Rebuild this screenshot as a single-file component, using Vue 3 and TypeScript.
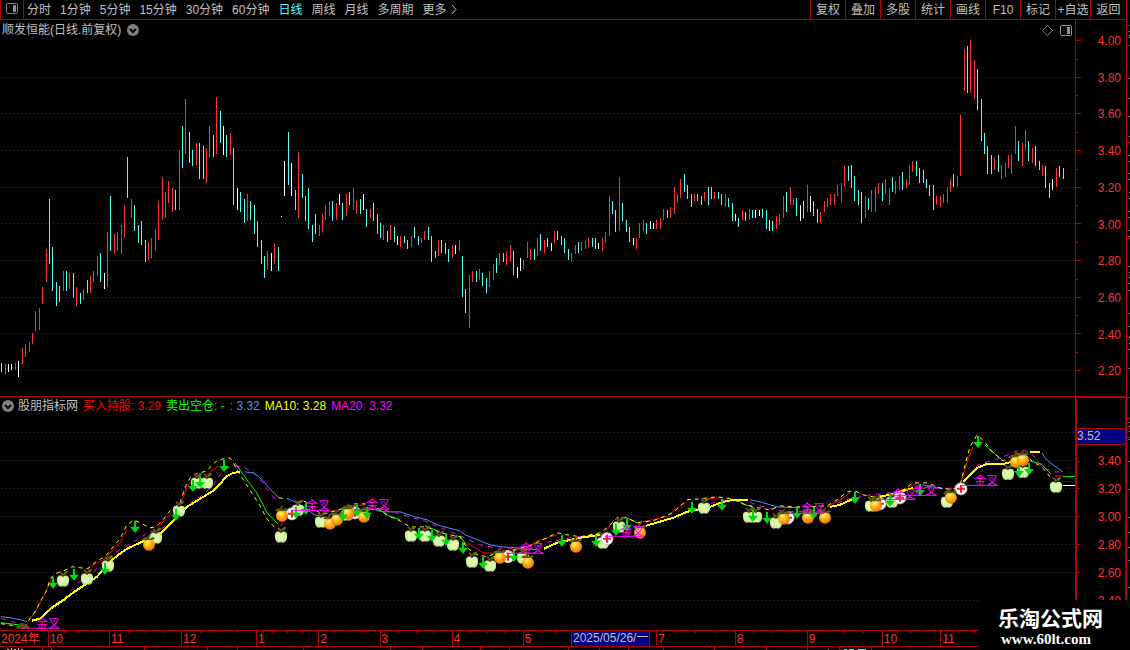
<script setup lang="ts">
import { ref } from 'vue'

type Point = [number, number]

const periods = ['分时', '1分钟', '5分钟', '15分钟', '30分钟', '60分钟', '日线', '周线', '月线', '多周期']
const active = ref('日线')
const tools = ['复权', '叠加', '多股', '统计', '画线', 'F10', '标记', '+自选', '返回']

const priceLabels = ['4.00', '3.80', '3.60', '3.40', '3.20', '3.00', '2.80', '2.60', '2.40', '2.20']
const subLabels = ['3.40', '3.20', '3.00', '2.80', '2.60', '2.40']
const priceTicks = [40, 77, 113, 150, 187, 223, 260, 297, 333, 370]
const priceMinor = [59, 95, 132, 169, 205, 242, 279, 315, 352]
const subGrid = [432, 460, 488, 516, 544, 572, 600]
const subMinor = [446, 474, 502, 530, 558, 586]

const bars = [
  {
    tone: 'up',
    data: `5,364,374 15,363,370 22,348,364 25,344,357 29,342,352 32,333,344 35,311,331 39,308,330 42,287,304 46,249,282
63,271,291 69,273,289 76,287,306 83,289,300 90,276,293 93,271,282 97,256,276 107,232,287 114,234,254 117,232,251 121,225,254 124,205,238
131,199,218 148,242,260 151,238,258 155,229,251 158,201,240 162,177,220 165,192,218 168,181,203 172,188,212 179,150,210 185,99,154
196,143,165 206,148,183 209,126,157 216,97,154 230,133,155 247,194,221 267,251,269 274,243,264 298,152,218 319,225,236 322,214,232
325,205,220 329,201,216 336,203,220 346,194,216 353,188,210 356,201,214 370,209,218 383,225,240 390,225,240 400,236,247 411,236,247
421,238,243 424,231,240 438,240,256 452,245,258 459,240,251 469,275,328 472,271,282 479,269,280 489,271,287 493,264,280 499,253,265
506,251,265 510,245,262 523,260,269 527,242,258 530,249,260 537,238,256 544,240,253 554,231,243 571,253,262 575,245,254 581,242,251
585,240,249 588,238,247 602,238,251 605,232,243 609,196,236 619,177,231 636,238,249 639,223,238 643,220,231 656,220,229 660,218,229
663,209,220 670,207,218 674,187,214 677,194,203 680,179,198 694,194,201 704,192,201 714,192,199 725,194,207 742,210,220 749,209,220
776,216,229 779,214,225 783,196,218 790,187,205 793,198,205 807,185,212 820,212,223 824,201,212 827,198,207 830,194,205 834,194,205
837,185,196 841,183,203 844,166,187 865,196,218 871,190,212 875,187,212 878,183,194 885,179,194 889,188,205 895,181,194 899,176,190
906,179,188 909,165,185 912,161,172 936,196,205 940,196,207 943,194,203 947,187,203 950,179,192 957,176,187 960,115,176 964,49,91
970,40,93 974,60,99 994,157,170 1001,165,179 1005,163,177 1008,155,168 1011,154,174 1015,126,154 1022,143,166 1025,130,150
1032,148,163 1042,165,176 1056,168,187`,
  },
  {
    tone: 'down',
    data: `1,363,372 49,199,264 52,247,291 56,282,306 59,286,302 66,271,291 73,273,298 80,293,304 87,280,293 100,253,282
110,196,251 127,157,198 134,205,231 138,225,243 141,221,245 145,240,262 175,190,210 182,126,168 189,132,163 192,150,166 199,143,179
203,146,179 213,135,157 220,111,143 226,135,157 233,148,205 240,192,212 244,199,223 250,201,220 254,205,234 257,221,247 261,240,264
264,256,278 278,247,271 288,132,185 295,190,210 302,174,198 305,196,221 308,188,229 312,225,242 315,214,234 332,201,221 342,203,220
349,192,205 360,199,214 366,209,227 373,203,221 377,214,234 380,223,238 387,231,242 394,227,242 404,236,243 407,240,249 414,227,238
418,236,245 428,227,240 431,236,262 435,251,258 441,240,253 445,243,254 448,249,262 462,256,297 465,289,313 476,271,282 482,273,286
486,278,293 496,258,273 503,253,262 513,251,275 534,249,260 540,234,251 547,238,247 557,231,240 561,236,245 564,238,253 568,249,260
578,242,253 592,238,247 595,238,249 612,201,214 615,210,232 622,203,221 626,220,232 629,227,242 646,223,234 667,210,218 684,174,192
687,185,199 691,194,207 697,194,201 701,196,205 708,187,205 711,187,199 718,192,199 721,194,205 728,198,207 732,203,221 738,218,227
745,212,221 752,210,218 762,209,218 766,210,229 772,221,231 786,192,212 796,198,216 803,201,218 813,201,216 817,209,223 848,166,181
851,165,188 854,176,201 858,190,205 861,192,223 868,198,210 882,183,201 892,177,192 902,172,190 916,161,176 919,168,183 923,170,183
926,179,188 929,185,196 933,185,210 953,174,187 967,46,93 977,69,110 981,99,141 984,133,154 987,146,174 991,155,174 998,155,172
1018,141,161 1028,141,161 1035,146,166 1039,161,170 1045,166,188 1049,183,198 1059,166,177 1063,168,179`,
  },
  {
    tone: 'flat',
    data: `8,364,372 11,364,370 18,361,377 104,273,289 223,126,155 237,188,210 271,253,271 281,216,217 284,161,196 291,163,196
339,194,205 363,194,210 397,236,245 455,245,254 517,267,278 520,258,271 551,243,251 598,243,249 633,238,245 650,221,229 653,223,229
735,214,221 755,210,218 759,210,216 769,220,231 800,205,221 810,196,212 1052,179,190`,
  },
].map((group) => ({
  tone: group.tone,
  path: group.data
    .split(/\s+/)
    .map((item) => {
      const [x, top, bottom] = item.split(',')
      return `M${x} ${top}h1V${bottom}h-1z`
    })
    .join(''),
}))

const curves: { kind: string; points: string }[] = [
  { kind: 'blue', points: '1,617 10,618 20,620 27,622' },
  { kind: 'blue', points: '245,472 253,473 258,476 263,481 269,488 275,494 279,498' },
  { kind: 'blue', points: '288,499 293,501 300,505 304,507 310,512 314,515 320,516' },
  { kind: 'blue', points: '370,508 378,511 385,512 400,512 415,517 427,520 440,526 460,531 465,535 480,541 490,545 500,547 517,548 537,550' },
  { kind: 'blue', points: '750,500 760,502 777,507 800,508' },
  { kind: 'blue', points: '922,485 943,489' },
  { kind: 'blue', points: '1042,453 1045,458 1053,465 1063,472' },
  { kind: 'magenta', points: '1,619 12,622 27,625' },
  { kind: 'magenta', points: '42,618 52,606 65,598 78,583 93,573 105,560 120,550 135,541 150,532 160,530 175,520 187,505 200,497 212,487 222,472 232,466 243,467 253,472 262,482 270,493 278,503' },
  { kind: 'magenta', points: '325,512 345,511 375,508 400,514 427,522 460,536 480,545 500,549 530,549 550,542 575,537 600,536 630,530 645,526 675,517 700,508 718,501 740,499 760,506 785,512 820,511 845,500 870,495 900,492 915,487 950,489 965,480 978,465 1000,458 1020,450 1030,452 1043,468 1055,472 1063,472' },
  { kind: 'red', points: '27,621 35,613 42,600 48,587 52,578' },
  { kind: 'red', points: '88,568 97,563 107,558 110,553 120,543 127,530' },
  { kind: 'red', points: '157,529 163,522 172,512' },
  { kind: 'red', points: '181,503 187,487 193,480' },
  { kind: 'red', points: '207,475 218,466' },
  { kind: 'red', points: '281,527 283,520' },
  { kind: 'red', points: '322,512 335,511 350,506 365,505' },
  { kind: 'red', points: '467,543 483,553 500,554 527,548 538,541 557,535' },
  { kind: 'red', points: '600,535 607,530 614,520' },
  { kind: 'red', points: '637,523 667,517 677,508 687,502' },
  { kind: 'red', points: '705,499 719,498' },
  { kind: 'red', points: '827,507 840,500 850,493' },
  { kind: 'red', points: '900,492 917,483' },
  { kind: 'red', points: '961,482 967,462 973,447' },
  { kind: 'red', points: '1055,476 1063,476' },
  { kind: 'green', points: '1,623 25,626' },
  { kind: 'green', points: '235,463 247,480 256,492 262,503 267,513 278,524' },
  { kind: 'green', points: '378,509 389,516 400,520' },
  { kind: 'green', points: '425,526 440,532' },
  { kind: 'green', points: '460,536 467,546' },
  { kind: 'green', points: '627,518 637,523' },
  { kind: 'green', points: '738,501 745,505 752,506' },
  { kind: 'green', points: '985,445 995,454 1003,461' },
  { kind: 'green', points: '1030,461 1041,464 1051,474' },
  { kind: 'dash', points: '1,624 25,628 28,622 35,612 42,599 47,590 50,579 55,574 64,571 72,567 88,569 97,561 105,557 110,551 120,539 127,525 134,520 142,524 150,528 156,527 163,520 170,511 180,503 185,488 190,478 196,474 207,471 212,465 218,460 230,458 235,466 240,475 250,490 260,506 267,519 275,528 281,530' },
  { kind: 'dash', points: '279,498 288,499' },
  { kind: 'dash', points: '296,503 302,501 306,502 312,508 320,513 325,514 345,508 355,504 365,504 375,507 388,516 400,521 410,527 427,527 440,533 460,537 467,548 477,555 487,557 500,552 513,550 527,547 543,540 557,533 567,535 580,537 600,533 607,528 617,518 627,518 637,523 653,521 673,513 687,500 700,499 717,497 733,499 740,503 753,507 770,510 780,506 793,507 807,507 827,506 837,500 847,492 855,491 863,495 873,497 887,495 903,490 913,483 927,483 940,488 953,490 961,482 965,465 970,447 977,435 985,442 990,450 1003,461 1013,455 1023,453 1033,462 1042,467 1050,477' },
  { kind: 'gold', points: '32,621 40,619 52,608 64,600 73,593 82,587 97,577 107,565 117,556 127,549 140,543 150,538 161,533 170,524 187,507 200,499 213,491 220,484 227,476 233,473 240,472' },
  { kind: 'gold', points: '544,549 557,543 580,538 600,535' },
  { kind: 'gold', points: '646,526 673,518 687,512 710,507 723,502 733,500 748,500' },
  { kind: 'gold', points: '830,507 840,505 855,498' },
  { kind: 'gold', points: '880,497 897,493 913,488' },
  { kind: 'gold', points: '963,482 970,475 977,468 987,464 1003,464 1012,462' },
  { kind: 'gold', points: '1030,452 1040,452' },
]

const apples: Point[] = [
  [63, 581], [87, 579], [108, 566], [156, 538], [179, 511], [197, 483], [207, 483], [281, 537], [298, 510], [321, 522], [347, 515],
  [411, 536], [425, 536], [439, 541], [453, 545], [472, 562], [490, 566], [523, 558], [603, 543], [619, 527], [704, 508],
  [749, 517], [756, 517], [776, 523], [871, 506], [892, 502], [947, 502], [1008, 474], [1023, 472], [1056, 487],
]
const crosses: Point[] = [[292, 514], [355, 513], [508, 557], [607, 539], [788, 518], [880, 504], [900, 498], [961, 489]]
const oranges: Point[] = [
  [149, 545], [282, 516], [330, 524], [337, 520], [348, 514], [364, 517], [500, 558], [528, 563], [576, 547], [640, 533],
  [784, 519], [808, 518], [825, 518], [876, 506], [951, 498], [1016, 462], [1023, 460],
]
const arrows: Point[] = [
  [53, 583], [74, 575], [105, 569], [135, 527], [176, 515], [193, 486], [200, 482], [224, 466], [296, 513], [306, 509], [343, 515],
  [357, 511], [367, 513], [419, 534], [432, 536], [446, 540], [463, 548], [483, 563], [514, 556], [562, 541], [596, 541], [616, 530],
  [627, 525], [692, 508], [722, 505], [753, 516], [767, 518], [797, 513], [814, 513], [855, 498], [890, 501], [920, 490], [978, 442],
  [1019, 471], [1029, 469],
]
const signals: { x: number; y: number; from: number }[] = [
  { x: 36, y: 628, from: 22 },
  { x: 306, y: 510, from: 292 },
  { x: 366, y: 509, from: 352 },
  { x: 520, y: 553, from: 506 },
  { x: 620, y: 536, from: 605 },
  { x: 801, y: 513, from: 788 },
  { x: 892, y: 499, from: 880 },
  { x: 913, y: 495, from: 900 },
  { x: 974, y: 485, from: 961 },
]

const months = [
  { label: '2024年', span: 48 },
  { label: '10', span: 61 },
  { label: '11', span: 72 },
  { label: '12', span: 75 },
  { label: '1', span: 62 },
  { label: '2', span: 61 },
  { label: '3', span: 72 },
  { label: '4', span: 71 },
  { label: '5', span: 67 },
  { label: '', span: 66 },
  { label: '7', span: 79 },
  { label: '8', span: 72 },
  { label: '9', span: 75 },
  { label: '10', span: 58 },
  { label: '11', span: 68 },
  { label: '', span: 119 },
]
const cursorLeft = `${(571 / 1126) * 100}%`

const edgeRed = [25, 45, 142, 238, 336, 397, 418, 437]
const edgeLight = [
  31, 35, 37, 78, 98, 116, 136, 155, 161, 173, 179, 192, 198, 211, 217, 230, 236, 266, 272, 277, 283, 290, 313, 326, 337, 343, 349, 368,
  422, 426, 431, 439, 461, 489, 517, 532, 547, 560, 587,
]
const footTicks = [42, 144, 207, 237, 303, 390, 422, 480, 509, 568, 599, 628, 663, 714, 766, 807, 839, 871]
</script>

<template>
  <div class="terminal">
    <div class="body">
      <header class="toolbar">
        <button class="panel-toggle" type="button" aria-label="侧栏">
          <svg width="12" height="11" viewBox="0 0 12 11" shape-rendering="crispEdges">
            <path d="M1 0h10v1h1v9h-1v1H1v-1H0V1h1zM1 1v9h10V1z" fill="#808080" fill-rule="evenodd" />
            <rect x="7" y="2" width="3" height="7" fill="#909090" />
          </svg>
        </button>
        <nav class="periods">
          <button v-for="p in periods" :key="p" type="button" :class="{ active: p === active }" @click="active = p">{{ p }}</button>
          <button type="button" class="more">
            更多
            <svg width="6" height="9" viewBox="0 0 6 9"><path d="M1 0l4 4.500l-4 4.500" fill="none" stroke="#c0c0c0" /></svg>
          </button>
        </nav>
        <div class="tools">
          <button v-for="t in tools" :key="t" type="button">{{ t }}</button>
        </div>
      </header>

      <section class="panel main">
        <div class="plot">
          <div class="title-row">
            <span>顺发恒能(日线.前复权)</span>
            <button class="round" type="button" aria-label="展开">
              <svg width="12" height="12" viewBox="0 0 12 12"><circle cx="6" cy="6" r="6" fill="#808080" /><path d="M3 5l3 3l3-3" fill="none" stroke="#000" stroke-width="2" /></svg>
            </button>
            <span class="corner">
              <svg width="11" height="11" viewBox="0 0 11 11"><path d="M5.500 .5l5 5l-5 5l-5-5z" fill="none" stroke="#808080" /></svg>
              <svg width="12" height="11" viewBox="0 0 12 11" shape-rendering="crispEdges">
                <path d="M1 0h10v1h1v9h-1v1H1v-1H0V1h1zM1 1v9h10V1z" fill="#909090" fill-rule="evenodd" />
                <rect x="7" y="2" width="3" height="7" fill="#909090" />
              </svg>
            </span>
          </div>
          <svg class="chart" viewBox="0 38 1075 358" preserveAspectRatio="none" shape-rendering="crispEdges">
            <defs>
              <pattern id="dots" width="4" height="1" patternUnits="userSpaceOnUse"><rect x="1" width="1" height="1" fill="#b00000" /></pattern>
            </defs>
            <rect v-for="y in priceTicks.slice(1)" :key="y" x="0" :y="y" width="1075" height="1" fill="url(#dots)" />
            <path v-for="b in bars" :key="b.tone" :d="b.path" :class="b.tone" />
          </svg>
        </div>
        <div class="axis">
          <svg class="ticks" viewBox="0 20 5 376" preserveAspectRatio="none" shape-rendering="crispEdges">
            <rect v-for="y in priceTicks" :key="y" :y="y" width="5" height="1" />
            <rect v-for="y in priceMinor" :key="y" :y="y" width="2" height="1" />
          </svg>
          <div class="labels">
            <span v-for="l in priceLabels" :key="l">{{ l }}</span>
          </div>
        </div>
      </section>

      <section class="panel sub">
        <div class="plot">
          <div class="legend">
            <button class="round" type="button" aria-label="展开指标">
              <svg width="12" height="12" viewBox="0 0 12 12"><circle cx="6" cy="6" r="6" fill="#808080" /><path d="M3 5l3 3l3-3" fill="none" stroke="#000" stroke-width="2" /></svg>
            </button>
            <span>股朋指标网</span>
            <span class="c-red">买入持股: 3.29</span>
            <span class="c-green">卖出空仓: -</span>
            <span class="c-blue">: 3.32</span>
            <span class="c-yellow">MA10: 3.28</span>
            <span class="c-magenta">MA20: 3.32</span>
          </div>
          <svg class="chart" viewBox="0 414 1075 216" preserveAspectRatio="none">
            <defs>
              <radialGradient id="peel" cx="40%" cy="30%" r="70%">
                <stop offset="0" stop-color="#ffee90" />
                <stop offset="50%" stop-color="#ffb010" />
                <stop offset="100%" stop-color="#f07000" />
              </radialGradient>
              <radialGradient id="flesh" cx="50%" cy="45%" r="60%">
                <stop offset="0" stop-color="#dcffa8" />
                <stop offset="70%" stop-color="#d4f5a8" />
                <stop offset="100%" stop-color="#a0b880" />
              </radialGradient>
              <g id="apple">
                <path d="M0 -4C-2 -6 -7 -6 -6 0C-6 4 -4 6 -2 6Q0 5 2 6C4 6 6 4 6 0C7 -6 2 -6 0 -4z" fill="url(#flesh)" />
                <path d="M0 -4L-1 -7L-3 -9" fill="none" stroke="#7c4424" stroke-width="2" />
                <path d="M0 -6Q1 -10 5 -10Q5 -6 0 -6z" fill="#5c7018" />
              </g>
              <g id="orange">
                <circle r="6" fill="url(#peel)" />
                <path d="M0 -5Q-3 -10 -7 -5Q-3 -4 0 -5Q3 -4 6 -6Q4 -10 0 -5z" fill="#4c6810" />
                <path d="M0 -5L-1 -8L1 -10" fill="none" stroke="#6c3c1c" stroke-width="2" />
              </g>
              <g id="cross">
                <circle r="6" fill="#fff" stroke="#c8c8c8" />
                <path d="M-1 -4h2v3h3v2h-3v3h-2v-3h-3v-2h3z" fill="#f02020" />
              </g>
              <path id="arrow" d="M-1 -6h2v6h4L0 6L-5 0h4z" fill="#00d810" />
            </defs>
            <g shape-rendering="crispEdges">
              <rect v-for="y in subGrid" :key="y" x="0" :y="y" width="1075" height="1" fill="url(#dots)" />
              <polyline v-for="(c, i) in curves" :key="i" :points="c.points" class="curve" :class="c.kind" />
              <rect x="1063" y="476" width="12" height="1" fill="#00ff00" />
              <rect x="1063" y="481" width="12" height="1" fill="#0000ff" />
              <rect x="1063" y="485" width="12" height="1" fill="#ffffff" />
            </g>
            <path d="M16 629Q18 624 22 626Q26 622 30 629z" fill="#4c5c18" />
            <path d="M22 628v-5" stroke="#704020" stroke-width="2" />
            <use v-for="([x, y], i) in apples" :key="'a' + i" href="#apple" :x="x" :y="y" />
            <use v-for="([x, y], i) in crosses" :key="'c' + i" href="#cross" :x="x" :y="y" />
            <use v-for="([x, y], i) in oranges" :key="'o' + i" href="#orange" :x="x" :y="y" />
            <use v-for="([x, y], i) in arrows" :key="'d' + i" href="#arrow" :x="x" :y="y" />
            <g v-for="s in signals" :key="s.x" class="signal">
              <rect :x="s.from" :y="s.y" :width="s.x + 23 - s.from" height="1" />
              <text :x="s.x" :y="s.y">金叉</text>
            </g>
          </svg>
        </div>
        <div class="axis">
          <svg class="ticks" viewBox="0 397 3 233" preserveAspectRatio="none" shape-rendering="crispEdges">
            <rect v-for="y in subGrid" :key="y" :y="y" width="3" height="1" />
            <rect v-for="y in subMinor" :key="y" :y="y" width="1" height="1" />
          </svg>
          <div class="sub-labels">
            <output class="price-cursor">3.52</output>
            <div class="labels">
              <span v-for="l in subLabels" :key="l">{{ l }}</span>
            </div>
          </div>
        </div>
      </section>

      <div class="timeline">
        <span v-for="(m, i) in months" :key="i" class="month" :style="{ flexGrow: m.span }">{{ m.label }}</span>
        <output class="date-cursor" :style="{ left: cursorLeft }">2025/05/26/一</output>
      </div>
      <svg class="foot" viewBox="0 0 1126 3" preserveAspectRatio="none" shape-rendering="crispEdges">
        <rect v-for="x in footTicks" :key="x" :x="x" width="1" height="3" fill="#b00000" />
        <path d="M7 2h2v1H7zM11 1h1v2h-1zM14 2h2v1h-2zM18 1h1v2h-1zM21 2h2v1h-2zM51 2h1v1h-1zM828 2h1v1h-1z" fill="#c0c0c0" />
        <path d="M844 2h3v1h-3zM849 2h5v1h-5zM858 2h8v1h-8z" fill="#54fcfc" />
      </svg>
    </div>
    <svg class="edge" viewBox="0 0 3 650" preserveAspectRatio="none" shape-rendering="crispEdges">
      <rect v-for="y in edgeRed" :key="y" :y="y" width="3" height="1" fill="#b00000" />
      <rect v-for="y in edgeLight" :key="y" x="2" :y="y" width="1" height="1" fill="#c0c0c0" />
    </svg>
    <aside class="brand">
      <strong>乐淘公式网</strong>
      <span>www.60lt.com</span>
    </aside>
  </div>
</template>

<style>
body {
  margin: 0;
  background: #000;
}
</style>

<style scoped>
.terminal {
  --line: #b00000;
  position: relative;
  display: flex;
  height: 100vh;
  overflow: hidden;
  background: #000;
  color: #c0c0c0;
  font: 12px/14px "Liberation Sans", "Noto Sans CJK SC", sans-serif;
}
.terminal * {
  box-sizing: border-box;
}
button {
  display: flex;
  align-items: center;
  justify-content: center;
  padding: 0;
  border: 0;
  background: none;
  color: inherit;
  font: inherit;
  white-space: nowrap;
}
.body {
  display: flex;
  flex: 1;
  flex-direction: column;
  min-width: 0;
}
.edge {
  flex: none;
  width: 4px;
  height: 100%;
  border-left: 1px solid var(--line);
}
.toolbar {
  display: flex;
  flex: none;
  height: 20px;
  border-bottom: 1px solid var(--line);
}
.panel-toggle {
  width: 24px;
  padding-right: 1px;
  padding-bottom: 2px;
  border-left: 1px solid var(--line);
  border-right: 1px solid var(--line);
}
.periods {
  display: flex;
  flex: 1;
  gap: 9px;
  padding-left: 3px;
}
.periods .active {
  color: #54fcfc;
}
.more {
  gap: 4px;
}
.tools {
  display: flex;
  width: 316px;
}
.tools button {
  flex: 0 0 35px;
  border-left: 1px solid var(--line);
}
.tools button:last-child {
  flex: 1;
}
.panel {
  display: flex;
  min-height: 0;
}
.main {
  flex: 377 1 0;
  border-bottom: 1px solid var(--line);
}
.sub {
  flex: 233 1 0;
}
.plot {
  display: flex;
  flex: 1;
  flex-direction: column;
  min-width: 0;
}
.title-row {
  display: flex;
  flex: none;
  align-items: center;
  gap: 6px;
  height: 18px;
  padding: 2px 3px 0 2px;
}
.corner {
  display: flex;
  gap: 7px;
  margin-left: auto;
}
.legend {
  display: flex;
  flex: none;
  align-items: center;
  gap: 5px;
  height: 17px;
  padding-left: 2px;
}
.legend .round {
  margin-right: -1px;
}
.chart {
  display: block;
  flex: 1;
  width: 100%;
  min-height: 0;
}
.axis {
  display: flex;
  flex: none;
  width: 51px;
  border-left: 1px solid var(--line);
  color: #ff3232;
}
.ticks {
  flex: none;
  width: 5px;
  height: 100%;
  fill: var(--line);
}
.labels {
  display: flex;
  flex: 1;
  flex-direction: column;
  justify-content: space-between;
  padding: 14px 5px 18px 0;
  text-align: right;
}
.sub .axis {
  border: solid var(--line);
  border-width: 1px 1px 0 2px;
  overflow: hidden;
}
.sub .ticks {
  width: 3px;
}
.sub-labels {
  display: flex;
  flex: 1;
  flex-direction: column;
  padding-top: 30px;
}
.price-cursor {
  flex: none;
  height: 17px;
  margin-left: -3px;
  border: solid var(--line);
  border-width: 1px 0;
  background: #000080;
  color: #c0c0c0;
  line-height: 15px;
}
.sub-labels .labels {
  padding: 9px 4px 22px 0;
}
.up {
  fill: #ff3232;
}
.down {
  fill: #54fcfc;
}
.flat {
  fill: #ffffff;
}
.curve {
  fill: none;
  stroke-width: 1px;
}
.blue {
  stroke: #5090f8;
}
.red {
  stroke: #ff0000;
}
.green {
  stroke: #00ff00;
}
.magenta {
  stroke: #ff00ff;
  stroke-dasharray: 5 5;
}
.dash {
  stroke: #ffff00;
  stroke-dasharray: 4 4;
}
.gold {
  stroke: #ffff00;
  stroke-width: 2px;
}
.signal {
  fill: #ff00ff;
}
.c-red {
  color: #ff0000;
}
.c-green {
  color: #00ff00;
}
.c-blue {
  color: #5090f8;
}
.c-yellow {
  color: #ffff00;
}
.c-magenta {
  color: #ff00ff;
}
.timeline {
  position: relative;
  display: flex;
  flex: none;
  height: 17px;
  border-top: 1px solid var(--line);
  border-bottom: 1px solid var(--line);
  color: #ff3232;
  line-height: 16px;
}
.month {
  flex: 0 1 0;
  min-width: 0;
  padding-left: 1px;
  border-left: 1px solid var(--line);
  background-image: linear-gradient(var(--line), var(--line)), linear-gradient(var(--line), var(--line)), linear-gradient(var(--line), var(--line));
  background-position: 25% 0, 50% 0, 75% 0;
  background-repeat: no-repeat;
  background-size: 1px 2px;
  white-space: nowrap;
}
.month:first-child {
  border-left: 0;
  background: none;
}
.date-cursor {
  position: absolute;
  top: 0;
  width: 79px;
  height: 15px;
  padding-left: 1px;
  border: solid var(--line);
  border-width: 0 1px;
  background: #000080;
  color: #c0c0c0;
  line-height: 15px;
}
.foot {
  flex: none;
  width: 100%;
  height: 3px;
}
.brand {
  position: absolute;
  right: 0;
  bottom: 0;
  display: flex;
  flex-direction: column;
  width: 152px;
  height: 50px;
  padding: 8px 0 0 20px;
  background: #000;
  color: #fff;
}
.brand strong {
  font-size: 21px;
  line-height: 22px;
}
.brand span {
  padding-left: 3px;
  font: bold 15px/18px "Liberation Serif", serif;
}
</style>
